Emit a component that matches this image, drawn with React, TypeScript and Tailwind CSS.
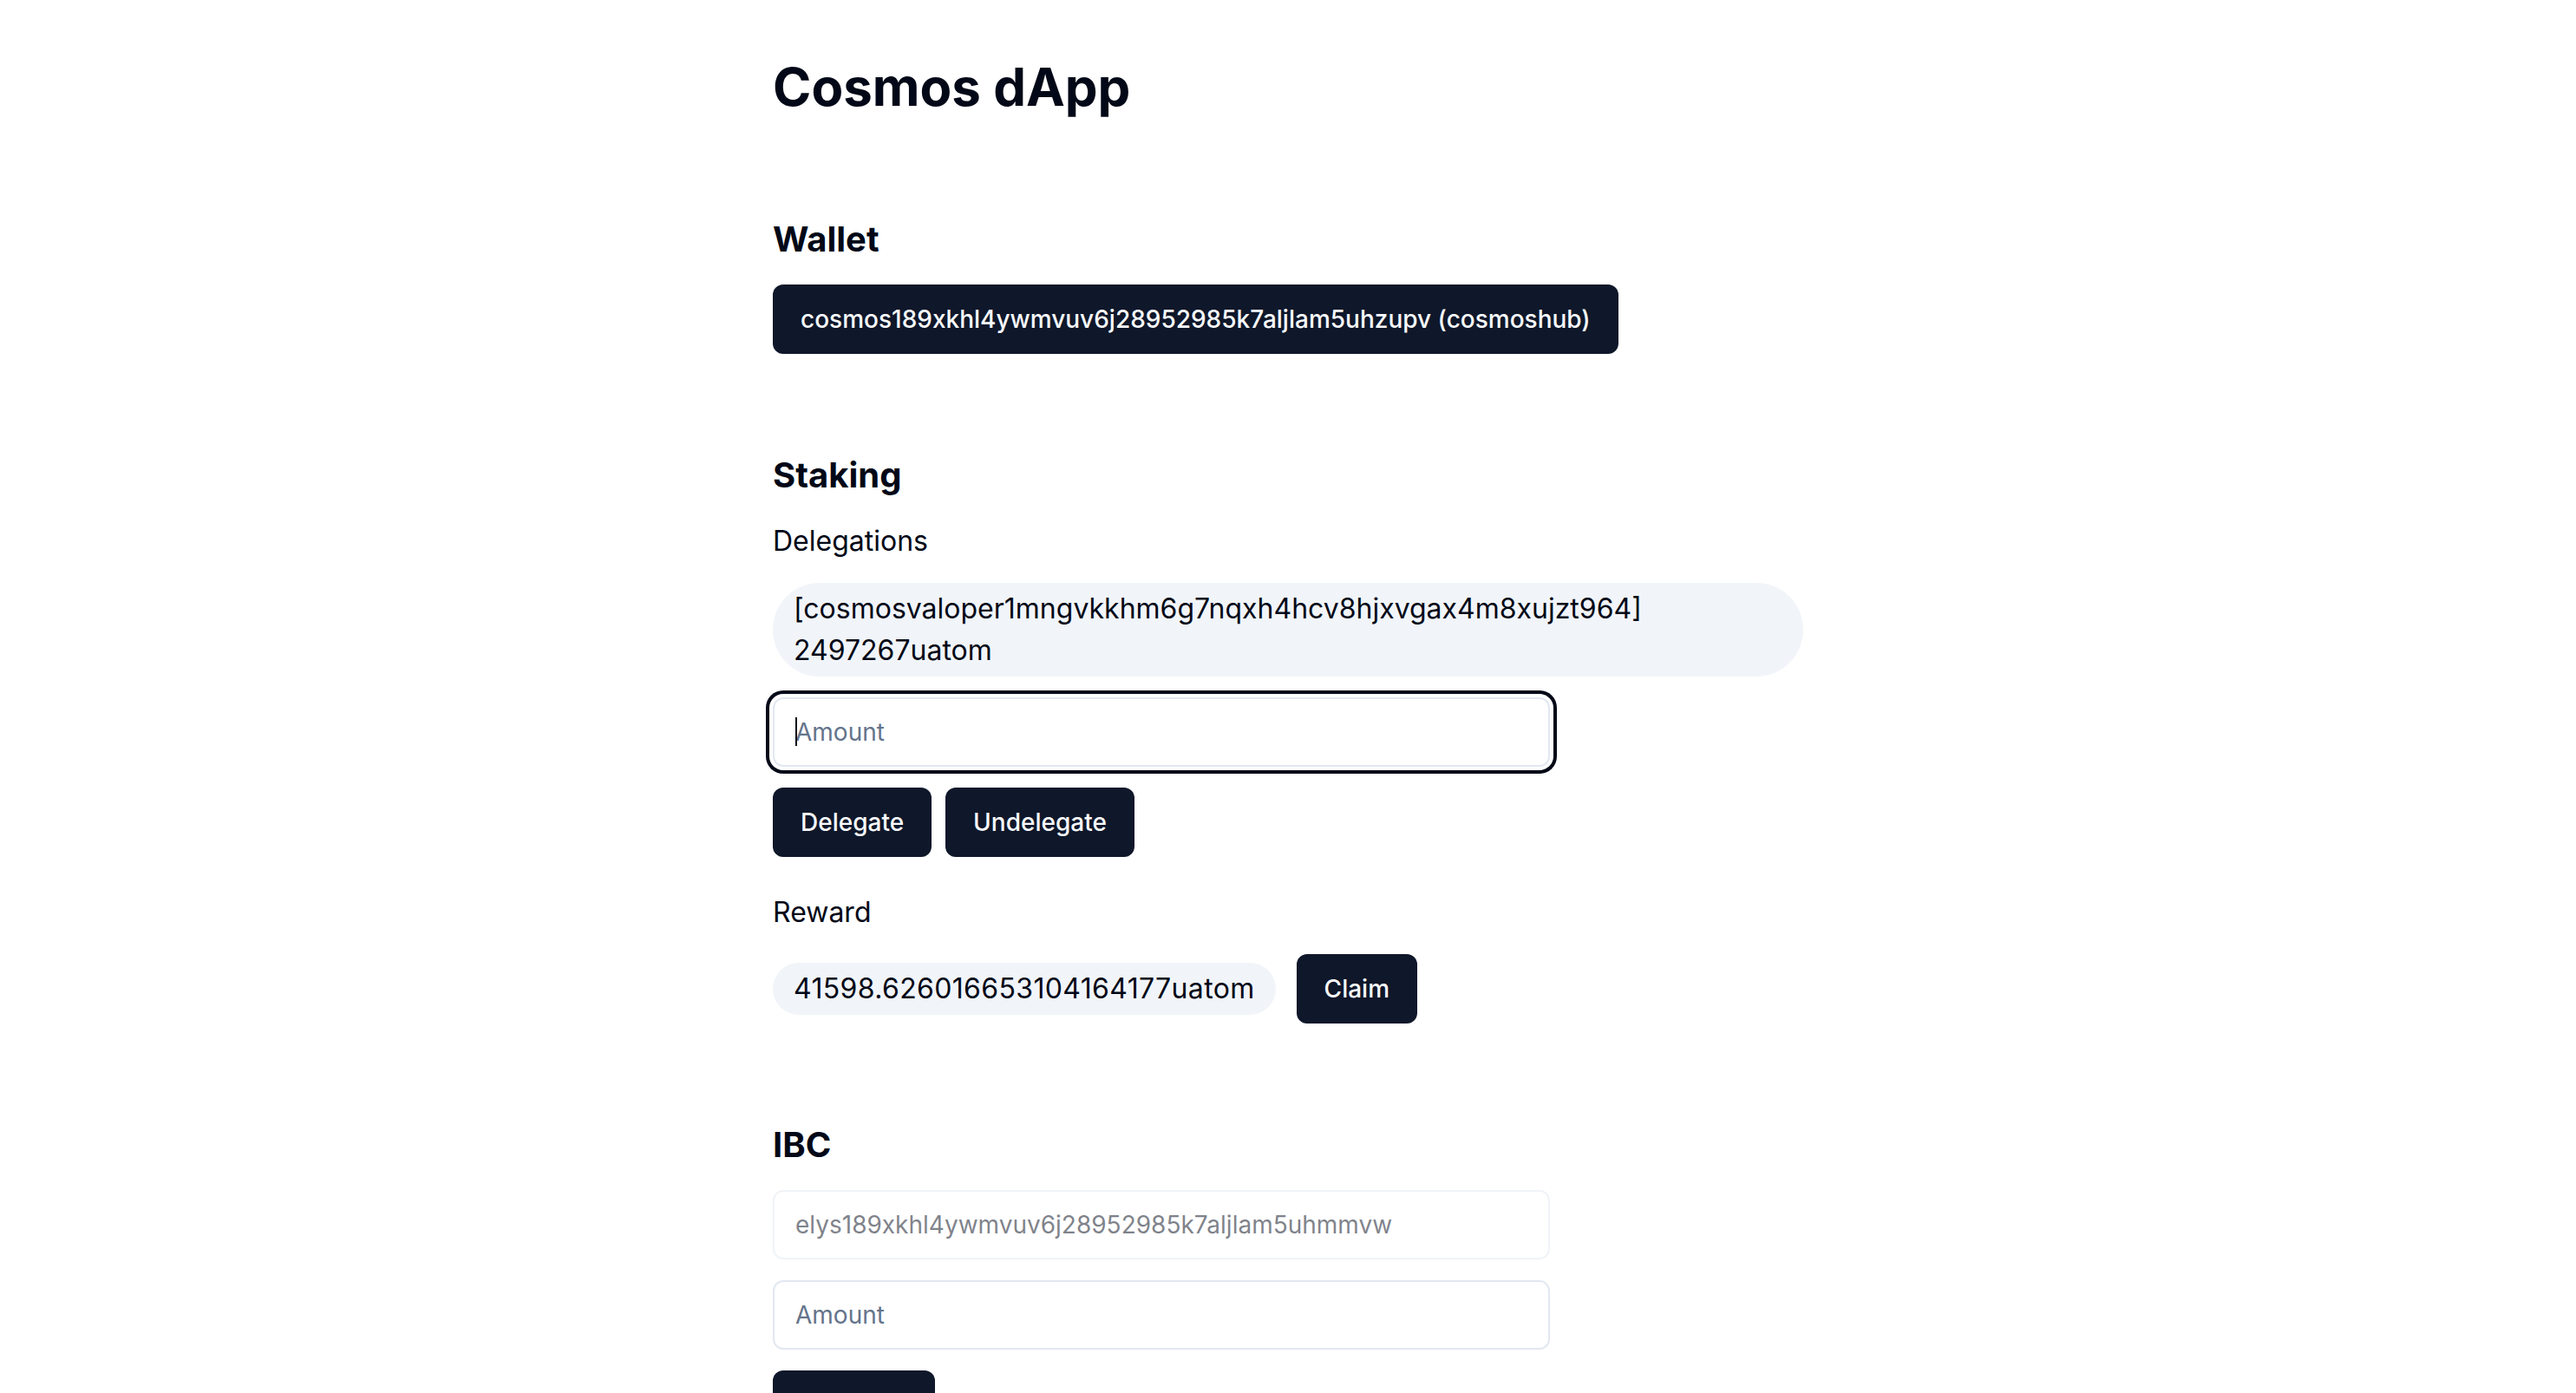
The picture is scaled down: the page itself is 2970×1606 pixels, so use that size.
import React from 'react';

const WALLET = 'cosmos189xkhl4ywmvuv6j28952985k7aljlam5uhzupv';
const VALIDATOR = 'cosmosvaloper1mngvkkhm6g7nqxh4hcv8hjxvgax4m8xujzt964';

function Button({ children }: { children: React.ReactNode }) {
  return (
    <button
      type="button"
      className="h-[80px] px-8 rounded-[12px] bg-[#0f172a] text-[#f8fafc] text-[28px] leading-[40px] font-medium whitespace-nowrap"
    >
      {children}
    </button>
  );
}

function Heading({ children }: { children: React.ReactNode }) {
  return <h2 className="text-[40px] leading-[56px] font-bold text-[#020817]">{children}</h2>;
}

export default function App() {
  return (
    <div className="min-h-screen bg-white text-[#020817] font-['Inter',sans-serif]">
      <main className="w-[1188px] mx-auto pt-16 flex flex-col gap-28">
        <h1 className="text-[60px] leading-[72px] font-bold">Cosmos dApp</h1>

        {/* Wallet */}
        <section className="flex flex-col gap-6 items-start">
          <Heading>Wallet</Heading>
          <Button>{WALLET} (cosmoshub)</Button>
        </section>

        {/* Staking */}
        <section className="flex flex-col gap-6 items-start">
          <Heading>Staking</Heading>
          <p className="text-[32px] leading-[48px]">Delegations</p>
          <div className="w-full rounded-full bg-[#f1f5f9] px-6 py-[6px] text-[32px] leading-[48px]">
            [{VALIDATOR}] 2497267uatom
          </div>
          <div className="relative w-[896px]">
            <input
              placeholder="Amount"
              className="w-full h-[80px] rounded-[12px] border-2 border-[#e2e8f0] bg-white px-6 text-[28px] outline-none placeholder:text-[#64748b] ring-4 ring-[#020817] ring-offset-4 ring-offset-white"
            />
            {/* caret */}
            <span className="absolute left-[26px] top-[23px] w-[2px] h-[33px] bg-[#020817]" />
          </div>
          <div className="flex gap-4">
            <Button>Delegate</Button>
            <Button>Undelegate</Button>
          </div>
          <p className="mt-4 text-[32px] leading-[48px]">Reward</p>
          <div className="flex items-center gap-6">
            <span className="rounded-full bg-[#f1f5f9] px-6 py-[6px] text-[32px] leading-[48px] tracking-[0.35px]">
              41598.626016653104164177uatom
            </span>
            <Button>Claim</Button>
          </div>
        </section>

        {/* IBC */}
        <section className="flex flex-col gap-6 items-start pb-16">
          <Heading>IBC</Heading>
          <input
            disabled
            readOnly
            value="elys189xkhl4ywmvuv6j28952985k7aljlam5uhmmvw"
            className="w-[896px] h-[80px] rounded-[12px] border-2 border-[#e2e8f0] bg-white px-6 text-[28px] text-[#020817] opacity-50 outline-none"
          />
          <input
            placeholder="Amount"
            className="w-[896px] h-[80px] rounded-[12px] border-2 border-[#e2e8f0] bg-white px-6 text-[28px] outline-none placeholder:text-[#64748b]"
          />
          <Button>Send IBC</Button>
        </section>
      </main>
    </div>
  );
}
